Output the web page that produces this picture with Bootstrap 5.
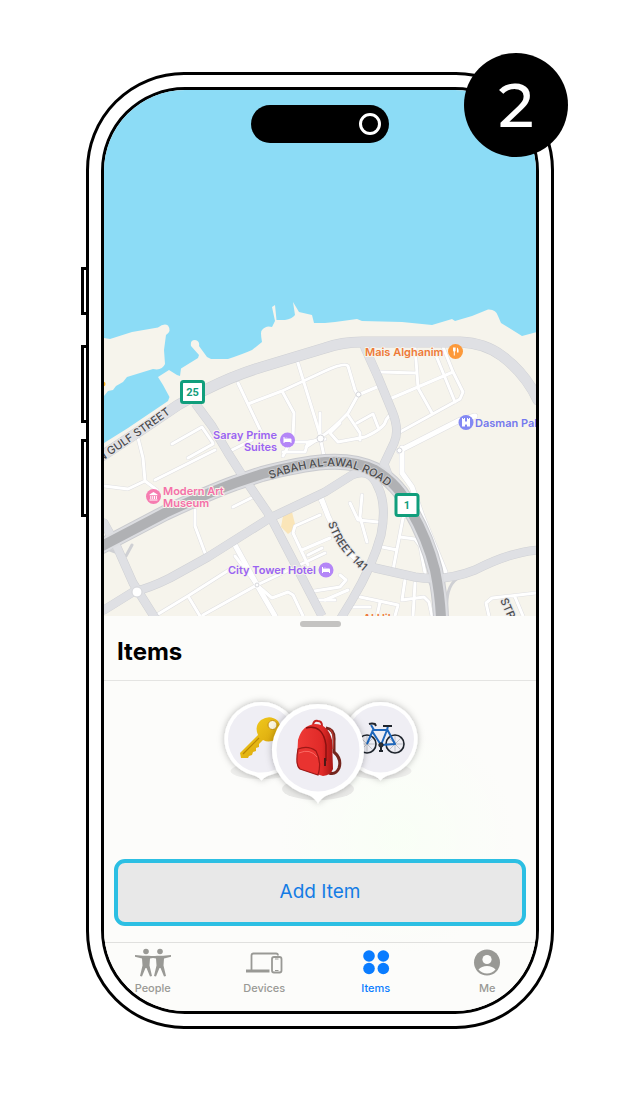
<!DOCTYPE html>
<html lang="en">
<head>
<meta charset="utf-8">
<meta name="viewport" content="width=device-width, initial-scale=1">
<title>Items</title>
<link href="https://cdn.jsdelivr.net/npm/bootstrap@5.3.0/dist/css/bootstrap.min.css" rel="stylesheet">
<style>
  body { font-family: Inter, "Liberation Sans", sans-serif; background: #fff; color: #000; }
  .stage { padding: 72px 24px; }
  .phone { max-width: 468px; border: 3px solid #000; border-radius: 98px; padding: 12px; background: #fff; }
  .phone-screen { border: 3px solid #000; border-radius: 84px; background: #fcfcfa; }
  .side-keys { left: -8px; top: 192px; }
  .side-key { width: 8px; border: 3px solid #000; height: 78px; }
  .side-key.short { height: 48px; margin-bottom: 14px; }
  .step { width: 104px; height: 104px; top: -22px; right: -17px; font-family: Montserrat, Inter, sans-serif; font-size: 62px; font-weight: 500; line-height: 1; z-index: 2; }
  .island { width: 138px; height: 38px; top: 15px; padding-right: 8px; }
  .lens { width: 22px; height: 22px; border: 3px solid #fff; }
  .map-art { width: 100%; height: auto; }
  .map-art text { font-size: 11px; font-weight: 600; paint-order: stroke; stroke: #f7f4ec; stroke-width: 2px; stroke-linejoin: round; }
  .map-art .road-name { font-weight: 500; fill: #4c4c4e; stroke: #e6e6e8; }
  .map-art .road-name.on-dark { stroke: #c8c9cc; }
  .map-art .shield { font-family: Roboto, sans-serif; font-weight: 700; stroke: none; }
  .sheet { background: radial-gradient(circle at 68% 56%, #f9fff6 0, rgba(252,252,250,0) 32%), #fcfcfa; }
  .sheet-head { height: 65px; border-bottom: 1px solid #e4e4e2; padding: 5px 13px 0; }
  .grip { width: 41px; height: 6px; background: #c4c3c1; }
  .sheet-title { font-size: 24px; line-height: 32px; font-weight: 700; margin-top: 9px; }
  .pins { height: 178px; padding-top: 9px; }
  .add-wrap { padding: 0 10px 16px; }
  .add-btn { height: 67px; border: 4px solid #2cbfe3; border-radius: 11px; background: #e8e8e8; color: #147ce5; font-size: 19px; }
  .add-btn:hover { background: #dedede; border-color: #2cbfe3; color: #147ce5; }
  .tabs { border-top: 1px solid #e0e0de; height: 69px; }
  .tab-row { margin: 0 -7px; }
  .tab { color: #999995; font-size: 11px; line-height: 14px; font-weight: 500; padding-top: 5px; gap: 3px; }
  .tab.current { color: #0a7cff; }
</style>
</head>
<body>
<main class="stage">
  <div class="phone position-relative mx-auto">
    <div class="side-keys position-absolute d-flex flex-column gap-3" aria-hidden="true">
      <span class="side-key short"></span><span class="side-key"></span><span class="side-key"></span>
    </div>
    <div class="step position-absolute rounded-circle bg-black text-white d-flex align-items-center justify-content-center">2</div>

    <div class="phone-screen position-relative overflow-hidden">
      <div class="island position-absolute start-50 translate-middle-x rounded-pill bg-black d-flex align-items-center justify-content-end">
        <span class="lens rounded-circle"></span>
      </div>

      <svg class="map-art d-block" viewBox="104 90 432 526" role="img" aria-label="Map">
        <defs>
          <g id="minor">
            <path d="M238 383L265 440M248 404L282 391L325 371Q345 362 348 366L355 390L358 395L377 387M358 395L348 413Q332 430 321 437M297 360L321 438M282 391L294 413L293 437L283 456M292 442H307M283 452H305L308 442L325 439"/>
            <path d="M172 444L202 427L213 443M188 458L213 444M138 438L143 458L145 481M104 486L128 489L145 481L157 490M155 480L215 450M228 452L252 440M195 510V526L205 553M233 507L253 497"/>
            <path d="M257 585L325 553M155 616L188 596L232 568M188 596L200 616M203 615L257 585L272 598L288 592L293 595L303 616M257 585L235 556M318 495L325 510M308 565L293 533L295 526L320 515M302 550L330 538"/>
            <path d="M308 592L340 587L346 580L340 575M315 600H335M360 597L398 605L395 616M380 602L377 616M350 607H370M405 580L402 600L424 597L429 602L432 616M415 583L413 616M403 518L393 570M400 537L415 539L420 546L425 573M382 547L397 550M350 503L358 520L378 522M362 495L360 517L367 542M404 516L416 520M489 616L486 603L492 598L536 593M515 597L523 616M320 413V437L324 456M321 437L306 447"/>
            <path d="M380 372L417 373L415 347M417 373L418 388L432 413M392 398L453 372L443 347M453 372L463 392L460 399L400 432M435 353L455 402M348 415L360 433V440M330 433L338 442L365 437Q385 428 386 420L389 416M340 423L330 433M357 423L373 414L378 427M322 548L308 555M325 600L348 590"/>
          </g>
          <g id="wide-minor">
            <path d="M235 545L257 585L275 616M320 495L328 516L342 547L366 567M399 451L460 420L475 416M402 448V473L412 487L422 516L445 572"/>
          </g>
          <g id="trunk">
            <path d="M195 403L212 426L228 453L242 475L270 516L322 616" stroke-linecap="butt"/>
            <path d="M104 610L133 592Q150 588 170 578L208 557L270 518L325 492L352 475Q370 467 378 487Q387 505 381 535Q373 565 352 600L341 618"/>
            <path d="M104 523L117 547L133 583L155 618M365 348L378 377L392 411Q400 430 394 443L384 464L390 480M375 568L415 577Q445 582 475 570Q510 552 538 550"/>
          </g>
          <path id="gulf" d="M102 456Q140 431 178 405L205 390Q235 375 262 367L325 348Q342 342 362 342H460Q485 343 502 356Q525 373 538 400"/>
          <path id="sabah" d="M102 546L165 513Q210 492 235 483L262 474Q300 464 325 462Q355 460 375 470Q400 485 410 509Q427 538 435 570Q440 595 441 618"/>
          <path id="gulf-name" d="M99 463Q143 434 185 403"/>
          <path id="sabah-name" d="M270 479Q317 462 346 467Q378 473 402 501"/>
          <path id="street-name" d="M328 523Q337 552 368 575"/>
          <path id="street-name-right" d="M500 600L514 632"/>
          <g id="bed" fill="#fff"><path d="M-4-3v6h1V2h6v1h1V-.5q0-1-1-1H-3V-3zM-2-2.2h1.800v1.200H-2z"/></g>
        </defs>
        <rect x="104" y="90" width="432" height="526" fill="#8cdcf6"/>
        <g fill="#f6f4ec">
          <path d="M104 338L110 339L132 332L158 327.500Q164 323 168 325.500Q172 331 166 335L164 350L165 364Q162 371 153 369L127 377L123 382L116 386L113 390L108 391L104 396Z"/>
          <path d="M104 443L128 428L168 401L169.500 397L163 385L158 377L169 370L177 375L180 376L181 368.500L198 358L199 355L191 346Q190 340 195 340Q200 341 199 346L207 357L211 359H228Q243 354 252 350L262 342Q260 331 262 330Q266 325 272 327L275 321L272 307L275 305L276.500 320L285 320Q292 319 295 315L293 302L299 312L312 315L314 323H325L335 322L357 319L362 321L402 322L432 325L452 319L455 321L472 316L488 309.500Q496 309 498 316L501 323L522 336L537 332V617H103Z"/>
        </g>
        <path d="M283 516L292 512L296 528L288 534L281 527Z" fill="#fae5b8"/>
        <g fill="none" stroke-linejoin="round" stroke-linecap="round">
          <use href="#minor" stroke="#dfdfe1" stroke-width="4"/>
          <use href="#wide-minor" stroke="#dfdfe1" stroke-width="6"/>
          <use href="#minor" stroke="#fff" stroke-width="3"/>
          <use href="#wide-minor" stroke="#fff" stroke-width="5"/>
          <use href="#trunk" stroke="#cfd0d4" stroke-width="9"/>
          <use href="#gulf" stroke="#cfd0d4" stroke-width="11"/>
          <use href="#sabah" stroke="#c9cace" stroke-width="16"/>
          <path d="M110 550L126 556L132 545M424 575Q436 586 434 606M460 577Q445 584 447 612" stroke="#cfd0d4" stroke-width="3"/>
          <use href="#trunk" stroke="#dfe0e4" stroke-width="8"/>
          <use href="#gulf" stroke="#dfe0e4" stroke-width="10"/>
          <use href="#sabah" stroke="#dcdde1" stroke-width="14"/>
          <use href="#sabah" stroke="#b0b1b4" stroke-width="10"/>
        </g>
        <g fill="#fff" stroke="#d5d6da"><circle cx="137" cy="592" r="5"/><circle cx="320.500" cy="438.500" r="3.500"/><circle cx="358.500" cy="394.500" r="2.500"/><circle cx="399.500" cy="450.500" r="2.500"/><circle cx="257" cy="585" r="2"/></g>
        <circle cx="103" cy="384" r="2.500" fill="#ffb21a"/>

        <text class="road-name"><textPath href="#gulf-name" startOffset="2">N GULF STREET</textPath></text>
        <text class="road-name on-dark"><textPath href="#sabah-name">SABAH AL-AWAL ROAD</textPath></text>
        <text class="road-name"><textPath href="#street-name">STREET 141</textPath></text>
        <text class="road-name"><textPath href="#street-name-right">STREET</textPath></text>

        <g fill="#ee7a38"><text x="365" y="356">Mais Alghanim</text><text x="363" y="622">Al Hil</text></g>
        <g fill="#9a63f2"><text x="277" y="439" text-anchor="end">Saray Prime</text><text x="277" y="451" text-anchor="end">Suites</text><text x="316" y="574" text-anchor="end">City Tower Hotel</text></g>
        <g fill="#f570a8"><text x="163" y="495">Modern Art</text><text x="163" y="507">Museum</text></g>
        <text x="475" y="427" fill="#7479ee">Dasman Palace</text>

        <circle cx="455.500" cy="351.500" r="7.500" fill="#fc993a"/>
        <path d="M453 347.500v3q0 1 .8 1v4h1v-4q.8 0 .8-1v-3M457 355.500v-8q2 1 1.500 5H457" fill="#fff"/>
        <circle cx="287.500" cy="440" r="7.500" fill="#b486f7"/><use href="#bed" x="287.500" y="440"/>
        <circle cx="326" cy="570" r="7.500" fill="#b486f7"/><use href="#bed" x="326" y="570"/>
        <circle cx="153.500" cy="496.500" r="7.500" fill="#f67db1"/>
        <path d="M149.500 494.500l4-2.500 4 2.500v.8h-8zM150.300 496h1v3h-1zm1.900 0h1v3h-1zm1.800 0h1v3h-1zm1.900 0h1v3h-1zM149.500 499.600h8v1h-8z" fill="#fff"/>
        <circle cx="466" cy="422.500" r="7.500" fill="#8389f3"/>
        <path d="M462 418h1v1h1v-1h1v3l1 1 1-1v-3h1v1h1v-1h1v8.500h-3V425q-1-1.500-2 0v1.500h-3z" fill="#fff"/>

        <g fill="#fff" stroke="#109e7c" stroke-width="3"><rect x="181.500" y="381.500" width="22" height="21" rx="2"/><rect x="396" y="494.500" width="22" height="21" rx="2"/></g>
        <g fill="#109e7c" text-anchor="middle"><text class="shield" x="192.500" y="396">25</text><text class="shield" x="407" y="509">1</text></g>
      </svg>

      <section class="sheet" aria-labelledby="sheet-title">
        <header class="sheet-head">
          <div class="grip rounded-pill mx-auto"></div>
          <h1 class="sheet-title mb-0" id="sheet-title">Items</h1>
        </header>

        <div class="pins d-flex justify-content-center align-items-start">
          <svg width="220" height="128" viewBox="210 690 220 128" role="img" aria-label="Key, backpack and bicycle">
            <defs>
              <filter id="soft" x="-30%" y="-30%" width="160%" height="160%"><feDropShadow dx="0" dy="0" stdDeviation="3.500" flood-color="#000" flood-opacity=".28"/></filter>
              <linearGradient id="gold" x2="1" y2="1"><stop stop-color="#f7d322"/><stop offset="1" stop-color="#d39b05"/></linearGradient>
              <linearGradient id="red" x2="1"><stop stop-color="#ef3a36"/><stop offset=".7" stop-color="#e02a28"/><stop offset="1" stop-color="#a81614"/></linearGradient>
            </defs>
            <g fill="#eeeeec"><ellipse cx="261.500" cy="771" rx="31" ry="8"/><ellipse cx="380.500" cy="771" rx="31" ry="8"/></g>
            <g filter="url(#soft)" fill="#fff">
              <path d="M261.500 702a37 37 0 0 1 9 72.900q-5 1-9 5.500q-4-4.500-9-5.500a37 37 0 0 1 9-72.900z"/>
              <path d="M380.500 702a37 37 0 0 1 9 72.900q-5 1-9 5.500q-4-4.500-9-5.500a37 37 0 0 1 9-72.900z"/>
            </g>
            <circle cx="261.500" cy="739" r="33.500" fill="#efeef4"/><circle cx="380.500" cy="739" r="33.500" fill="#efeef4"/>

            <path d="M258 735q-4-9 3-15q9-6 17 1q6 9-1 17q-7 6-14 2l-4 4v3l-3 1v3l-3 1-1 3-3 1-1 2h-7l-1-5z" fill="url(#gold)"/>
            <path d="M243 754l16-16" stroke="#b98505" stroke-width="1.200"/><circle cx="272.500" cy="725" r="4.500" fill="#fbf6df" stroke="#c99208"/>

            <g fill="none" stroke="#1f252d">
              <g stroke="#8d949c" stroke-width=".5"><path d="M367 735v18M358 744h18M361 738l12 12M373 738l-12 12M395 735v18M386 744h18M389 738l12 12M401 738l-12 12"/></g>
              <circle cx="367" cy="744" r="9" stroke-width="1.600"/><circle cx="395" cy="744" r="9" stroke-width="1.600"/>
              <path d="M367 744l6-14h14l-6 15-9-14M371 725l3 5M387 729l8 15-14 1M388 726l-1 4" stroke="#1d66bb" stroke-width="2" stroke-linejoin="round"/>
              <path d="M369 724q3-1 6 0l1 2M383 726h9M381 745v6M379 751h4" stroke-width="2"/><circle cx="381" cy="745" r="2.200" fill="#333"/>
            </g>

            <ellipse cx="318" cy="789" rx="36" ry="11" fill="#e9e9e7"/>
            <path filter="url(#soft)" d="M318 704a46 46 0 0 1 10 90.900q-6 2-10 8.500q-4-6.500-10-8.500a46 46 0 0 1 10-90.900z" fill="#fff"/>
            <circle cx="318" cy="750" r="41.500" fill="#efeef4"/>
            <path d="M326 728q9 1 8 13v11q8 7 5 16q-3 7-10 5" fill="none" stroke="#73251d" stroke-width="3"/>
            <path d="M330 729q5 5 3 20" fill="none" stroke="#b9382f" stroke-width="1.200"/>
            <path d="M313 726q0-6 5-5q4 0 4 5" fill="none" stroke="#c22220" stroke-width="2"/>
            <path d="M298 740Q302 725 315 724Q328 724 332 740L333 769Q331 775 323 776L300 769Q296 766 297 760Z" fill="url(#red)"/>
            <path d="M306 728Q323 724 326 745V761" fill="none" stroke="#8a1110" stroke-width="1.500"/>
            <path d="M298 749Q308 745 316 751Q322 762 318 775L300 769Q295 765 298 749Z" fill="#e93330" stroke="#9d1917" stroke-width="1.200"/>
            <path d="M299 753Q310 748 317 757" fill="none" stroke="#ff7770" stroke-width=".8"/><path d="M325 758v8" stroke="#4b1a17" stroke-width="2"/>
          </svg>
        </div>

        <div class="add-wrap"><button type="button" class="add-btn btn w-100 d-block p-0">Add Item</button></div>

        <nav class="tabs" aria-label="Sections">
          <div class="tab-row d-flex">
            <a href="#people" class="tab d-flex flex-column align-items-center text-decoration-none flex-fill w-25">
              <svg width="38" height="30" viewBox="0 0 38 30" fill="currentColor" aria-hidden="true"><circle cx="12" cy="3.500" r="2.800"/><circle cx="26" cy="3.500" r="2.800"/><path d="M1 7L9 7.800h6q4 .5 8 0h6l8-.8v1.800L30 10.500l-.5 7L32 28l-2 .5L26.500 20h-1L22 28.500l-2-.5 2.500-10.500-.5-7-3-.5-3 .5-.5 7L18 28l-2 .5L12.500 20h-1L8 28.500 6 28l2.500-10.500-.5-7L1 8.800z"/></svg>
              <span>People</span>
            </a>
            <a href="#devices" class="tab d-flex flex-column align-items-center text-decoration-none flex-fill w-25">
              <svg width="38" height="30" viewBox="0 0 38 30" fill="none" stroke="currentColor" stroke-width="1.800" aria-hidden="true"><path d="M6.500 23V7.500q0-2 2-2H31q2 0 2 2"/><path d="M1 23h23.500" stroke-width="3"/><rect x="27" y="9" width="9.500" height="15.500" rx="2"/><path d="M30 11h3.500M30 22.500h3.500" stroke-width="1"/></svg>
              <span>Devices</span>
            </a>
            <a href="#items" class="tab current d-flex flex-column align-items-center text-decoration-none flex-fill w-25" aria-current="page">
              <svg width="38" height="30" viewBox="0 0 38 30" fill="currentColor" aria-hidden="true"><circle cx="12" cy="8" r="5.800"/><circle cx="26.300" cy="8" r="5.800"/><circle cx="12" cy="20.500" r="5.800"/><circle cx="26.300" cy="20.500" r="5.800"/></svg>
              <span>Items</span>
            </a>
            <a href="#me" class="tab d-flex flex-column align-items-center text-decoration-none flex-fill w-25">
              <svg width="38" height="30" viewBox="0 0 38 30" aria-hidden="true"><circle cx="19" cy="14.500" r="13" fill="currentColor"/><circle cx="19" cy="11.500" r="4.600" fill="#fcfcfa"/><path d="M10.500 21.500q3-3.500 8.500-3.500t8.500 3.500Q24 25.500 19 25.500T10.500 21.500z" fill="#fcfcfa"/></svg>
              <span>Me</span>
            </a>
          </div>
        </nav>
      </section>
    </div>
  </div>
</main>
<script src="https://cdn.jsdelivr.net/npm/bootstrap@5.3.0/dist/js/bootstrap.bundle.min.js"></script>
</body>
</html>
